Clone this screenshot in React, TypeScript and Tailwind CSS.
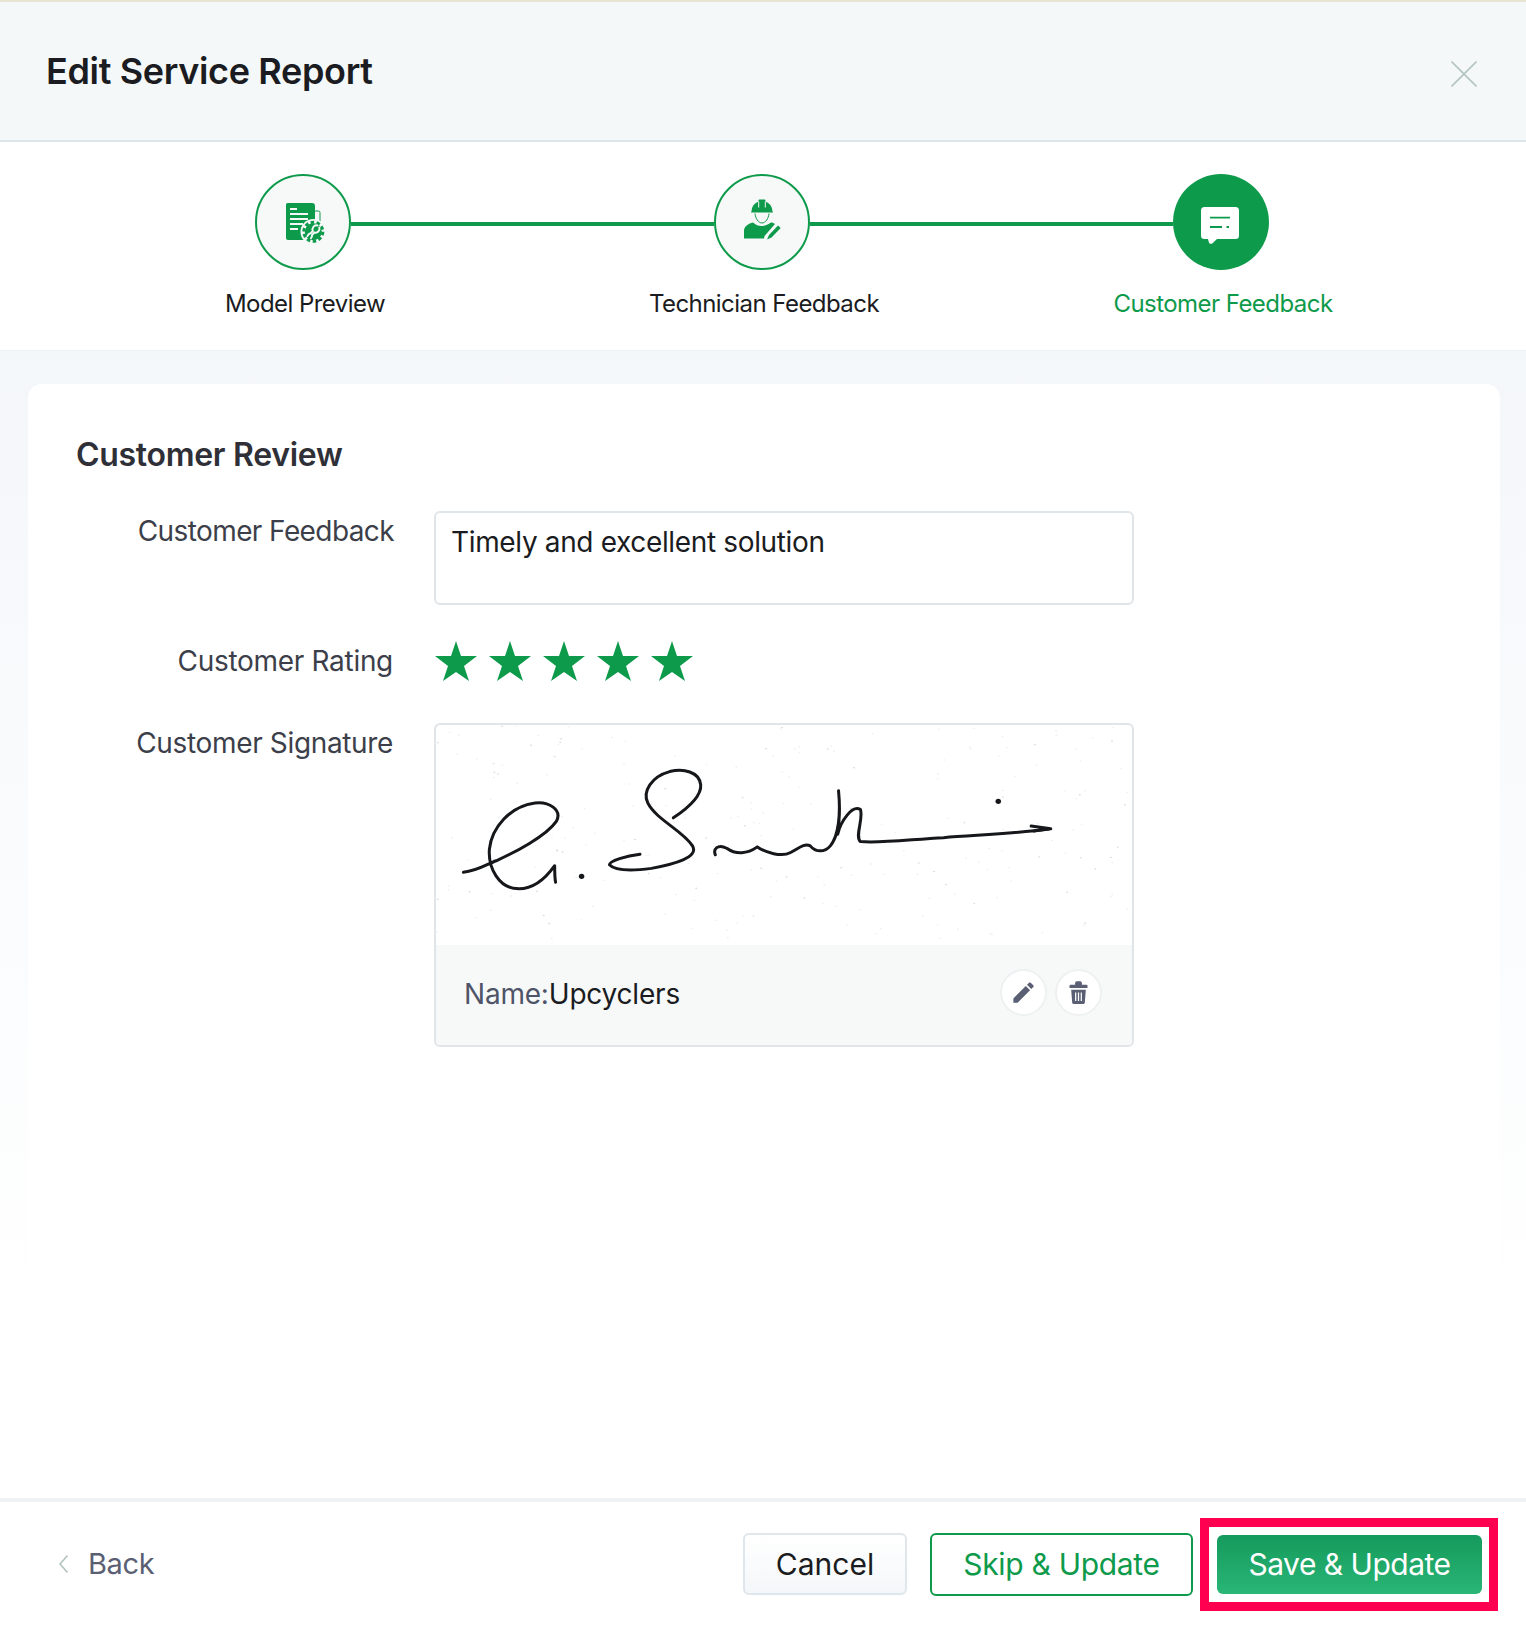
import React from 'react';
import { MdEdit } from 'react-icons/md';

const GREEN = '#0e9a4b';

const ReportIcon = () => (
    <svg viewBox="0 0 48 48" className="w-12 h-12">
        <path d="M36 13h3.500a1.500 1.500 0 0 1 1.500 1.500V26" fill="none" stroke={GREEN} strokeWidth="1" />
        <path d="M8.500 5H33a3 3 0 0 1 3 3v34H9a2 2 0 0 1-2-2V6.500A1.500 1.500 0 0 1 8.500 5z" fill={GREEN} />
        <path d="M11 11h7M11 16h18M11 21h18M11 26h13M11 31h8" stroke="#f7f9f9" strokeWidth="1.800" fill="none" />
        <circle cx="34.300" cy="33.700" r="12.800" fill="#f7f9f9" />
        <circle cx="34.300" cy="33.700" r="8.500" fill={GREEN} />
        <circle cx="34.300" cy="33.700" r="9.500" fill="none" stroke={GREEN} strokeWidth="3" strokeDasharray="3.500 2.470" />
        <path d="M38.500 27.500a4 4 0 0 0-4.700 5.500l-2.300 2.300a4 4 0 0 0-3 2.700M40.300 29.500a4 4 0 0 1-5 5l-2.300 2.500a4 4 0 0 1-1 3.200" fill="none" stroke="#f7f9f9" strokeWidth="1.900" strokeLinecap="round" />
    </svg>
);

const WorkerIcon = () => (
    <svg viewBox="0 0 48 48" className="w-12 h-12">
        <path d="M13 14.500c0-.8.200-1.200.6-1.300.2-5 3-8.200 6.900-9.400V2.500a1 1 0 0 1 1-1h5a1 1 0 0 1 1 1v1.300c3.900 1.200 6.700 4.400 6.900 9.400.4.100.6.500.6 1.300z" fill={GREEN} />
        <path d="M20.700 3.500v6M27.300 3.500v6" stroke="#f7f9f9" strokeWidth="1" fill="none" />
        <path d="M17 15.500c.5 5 3.500 9.500 7 9.500s6.500-4.500 7-9.500" fill="none" stroke={GREEN} strokeWidth="1" />
        <path d="M6 40.500V33c0-4.500 3.500-7 9-8.500 2.500 2.500 5.500 3.500 8.500 3.500s6-1 9.500-3.500c1.500 0 3 .6 4 1.500L26.500 38l-.5 2.500z" fill={GREEN} />
        <path d="M31 37l9-9.500 2.700 2.500-9.200 9.500-4.500 2z" fill={GREEN} />
    </svg>
);

const ChatIcon = () => (
    <svg viewBox="0 0 48 48" className="w-12 h-12">
        <path d="M7.500 9h31a3.500 3.500 0 0 1 3.500 3.500v25a3.500 3.500 0 0 1-3.500 3.500H20l-4.500 4.200c-1 .8-3 .8-3.500-.5L11 41H7.500A3.500 3.500 0 0 1 4 37.500v-25A3.500 3.500 0 0 1 7.500 9z" fill="#fff" />
        <path d="M13 19.700h20M13 29h12M29.500 29h2.500" stroke={GREEN} strokeWidth="1.800" fill="none" />
    </svg>
);

const TrashIcon = () => (
    <svg viewBox="0 0 24 24" className="w-[27px] h-[27px]">
        <path d="M9 3.500A1.500 1.500 0 0 1 10.500 2h3A1.500 1.500 0 0 1 15 3.500V5h4a1 1 0 0 1 1 1v2H4V6a1 1 0 0 1 1-1h4zM5.500 9.500h13L17.600 21a1.500 1.500 0 0 1-1.500 1.300H7.900A1.500 1.500 0 0 1 6.400 21z" fill="#5a5f73" />
        <path d="M9.500 12v7.500M12 12v7.500M14.500 12v7.500" stroke="#fff" strokeWidth="1.100" fill="none" />
    </svg>
);

const Star = () => (
    <svg viewBox="0 0 42 40" className="w-[42px] h-10">
        <polygon points="21,0 26,15 42,15 29,25 34,40 21,31 8,40 13,25 0,15 16,15" fill={GREEN} />
    </svg>
);

// scanner specks on the signature image, seeded so the picture stays the same
const specks = Array.from({ length: 220 }, (_, i) => {
    const a = Math.sin(i * 12.9898) * 43758.5453;
    const b = Math.sin(i * 78.233) * 12543.1234;
    return { x: 10 + (a - Math.floor(a)) * 1520, y: 12 + (b - Math.floor(b)) * 650, o: i % 4 === 0 ? 0.22 : 0.1 };
});

const Signature = () => (
    <svg viewBox="8 9 1525 666" preserveAspectRatio="none" className="block w-full h-[220px]">
        {specks.map((s, i) => (
            <circle key={i} cx={s.x} cy={s.y} r="2.200" fill="#555" opacity={s.o} />
        ))}
        <g fill="none" stroke="#15171a" strokeWidth="3" strokeLinecap="round" strokeLinejoin="round">
            <path vectorEffect="non-scaling-stroke" d="M68 455C100 450 120 430 140 420C180 395 250 345 272 300C285 265 255 240 225 245C170 255 130 320 125 385C122 440 145 505 190 505C225 505 250 470 268 435C268 450 268 470 270 485" />
            <path vectorEffect="non-scaling-stroke" d="M528 290C555 265 590 225 588 190C585 150 550 140 520 150C480 165 460 210 472 245C490 295 550 330 570 375C585 410 530 430 480 443C440 450 400 450 388 432C388 420 425 405 455 400" />
            <path vectorEffect="non-scaling-stroke" d="M620 402C615 385 625 368 645 382C665 402 690 400 712 378C730 395 765 410 785 395C800 385 815 365 828 375C840 395 860 395 872 375C890 345 895 280 890 208C893 250 893 290 888 340C895 300 920 250 938 265C945 295 925 345 938 362C980 368 1050 355 1120 350C1190 342 1280 338 1350 324" />
            <path vectorEffect="non-scaling-stroke" d="M1312 315L1355 323L1318 330" />
        </g>
        <g fill="#15171a">
            <ellipse cx="327" cy="467" rx="6" ry="8" />
            <ellipse cx="1240" cy="240" rx="6" ry="8" />
        </g>
    </svg>
);

const steps = [
    { label: 'Model Preview', active: false, Icon: ReportIcon },
    { label: 'Technician Feedback', active: false, Icon: WorkerIcon },
    { label: 'Customer Feedback', active: true, Icon: ChatIcon },
];

const App: React.FC = () => {
    return (
        <div className="w-[1526px] h-[1626px] flex flex-col bg-white font-[Inter,sans-serif] text-[#1a1c21] overflow-hidden">
            <div className="h-[2px] bg-[#e8e4d4]" />

            {/* Header */}
            <div className="h-[140px] flex items-center justify-between pl-[46px] pr-[49px] bg-[#f4f8f9] border-b-2 border-[#dde4ea]">
                <h1 className="text-[36px] font-semibold tracking-[-0.35px]">Edit Service Report</h1>
                <svg viewBox="0 0 26 26" className="w-[26px] h-[26px] mt-[6px]">
                    <path d="M0.500 0.500L25.500 25.500M25.500 0.500L0.500 25.500" stroke="#b5c4bf" strokeWidth="1.600" fill="none" />
                </svg>
            </div>

            {/* Stepper */}
            <div className="h-[209px] pt-8 border-b border-[#f0f1f3]">
                <div className="flex items-center justify-center pr-[2px]">
                    {steps.map(({ label, active, Icon }, idx) => (
                        <React.Fragment key={label}>
                            {idx > 0 && <div className="w-[363px] h-1 mt-1 bg-[#0e9a4b]" />}
                            <div className={`w-24 h-24 rounded-full flex items-center justify-center ${active ? 'bg-[#0e9a4b]' : 'bg-[#f7f9f9] border-2 border-[#0e9a4b]'}`}>
                                <Icon />
                            </div>
                        </React.Fragment>
                    ))}
                </div>
                <div className="grid grid-cols-[459px_459px_459px] justify-center mt-[18px]">
                    {steps.map(({ label, active }) => (
                        <div key={label} className={`text-center text-[24px] leading-8 pl-[2px] tracking-[-0.55px] ${active ? 'text-[#0e9a4b]' : ''}`}>
                            {label}
                        </div>
                    ))}
                </div>
            </div>

            {/* Body */}
            <div className="flex-1 flex flex-col pt-[33px] pl-7 pr-[26px] bg-linear-to-b from-[#f4f7fa] to-white to-[85%]">
                <div className="flex-1 bg-white rounded-t-[14px]">
                    <h2 className="pl-12 pt-[51px] text-[32px] leading-10 font-semibold tracking-[-0.3px] text-[#2f3037]">Customer Review</h2>

                    <div className="flex mt-[36px]">
                        <div className="w-[366px] text-right text-[28px] leading-10 tracking-[-0.6px] text-[#3c3f4a]">Customer Feedback</div>
                        <div className="ml-10 w-[700px] h-[94px] px-[15px] py-[9px] rounded-[6px] border-2 border-[#dfe5e9] text-[28px] leading-10 tracking-[-0.35px]">
                            Timely and excellent solution
                        </div>
                    </div>

                    <div className="flex items-center mt-[32px] h-[47px]">
                        <div className="w-[365px] mr-[1px] text-right text-[28px] leading-10 tracking-[-0.3px] text-[#3c3f4a]">Customer Rating</div>
                        <div className="ml-[41px] flex gap-3">
                            {[0, 1, 2, 3, 4].map(i => <Star key={i} />)}
                        </div>
                    </div>

                    <div className="flex mt-[39px]">
                        <div className="w-[365px] mr-[1px] text-right text-[28px] leading-10 tracking-[-0.35px] text-[#3c3f4a]">Customer Signature</div>
                        <div className="ml-10 w-[700px] rounded-[6px] border-2 border-[#dfe5e9] overflow-hidden">
                            <Signature />
                            <div className="h-[100px] flex items-center justify-between pl-[28px] pr-[30px] pb-[6px] bg-[#f7f9f9]">
                                <div className="text-[28px] tracking-[-0.2px] mt-1">
                                    <span className="text-[#4f5468]">Name:</span>Upcyclers
                                </div>
                                <div className="flex gap-2">
                                    <div className="w-[47px] h-[47px] rounded-full bg-white border-2 border-[#eef0f2] flex items-center justify-center text-[#5a5f73]">
                                        <MdEdit size={27} />
                                    </div>
                                    <div className="w-[47px] h-[47px] rounded-full bg-white border-2 border-[#eef0f2] flex items-center justify-center">
                                        <TrashIcon />
                                    </div>
                                </div>
                            </div>
                        </div>
                    </div>
                </div>
            </div>

            {/* Footer */}
            <div className="relative h-[128px] shrink-0 flex items-center justify-between pl-[59px] pr-[44px] border-t-4 border-[#eff2f5] bg-white">
                <div className="flex items-center gap-5 text-[#5a5f73] text-[29px] tracking-[-0.4px]">
                    <svg viewBox="0 0 9 18" className="w-[9px] h-[18px]">
                        <path d="M8.500 0.500L1 9L8.500 17.500" stroke="#b4c4c0" strokeWidth="1.600" fill="none" />
                    </svg>
                    Back
                </div>
                <div className="flex items-center">
                    <button className="w-[164px] h-[62px] rounded-[6px] border-2 border-[#dfe6ec] bg-linear-to-b from-white to-[#f4f7f9] text-[30px]">Cancel</button>
                    <button className="ml-[23px] w-[263px] h-[63px] rounded-[6px] border-2 border-[#0e9a4b] bg-white text-[#0e9a4b] text-[30px] tracking-[-0.3px]">Skip &amp; Update</button>
                    <button className="ml-6 w-[265px] h-[59px] rounded-[6px] bg-linear-to-b from-[#149a5c] to-[#29b676] text-white text-[30px] tracking-[-0.5px]">Save &amp; Update</button>
                </div>
                {/* red highlight box drawn over the screenshot */}
                <div className="absolute left-[1200px] top-4 w-[298px] h-[93px] border-[9px] border-[#ff0050]" />
            </div>
        </div>
    );
};

export default App;
